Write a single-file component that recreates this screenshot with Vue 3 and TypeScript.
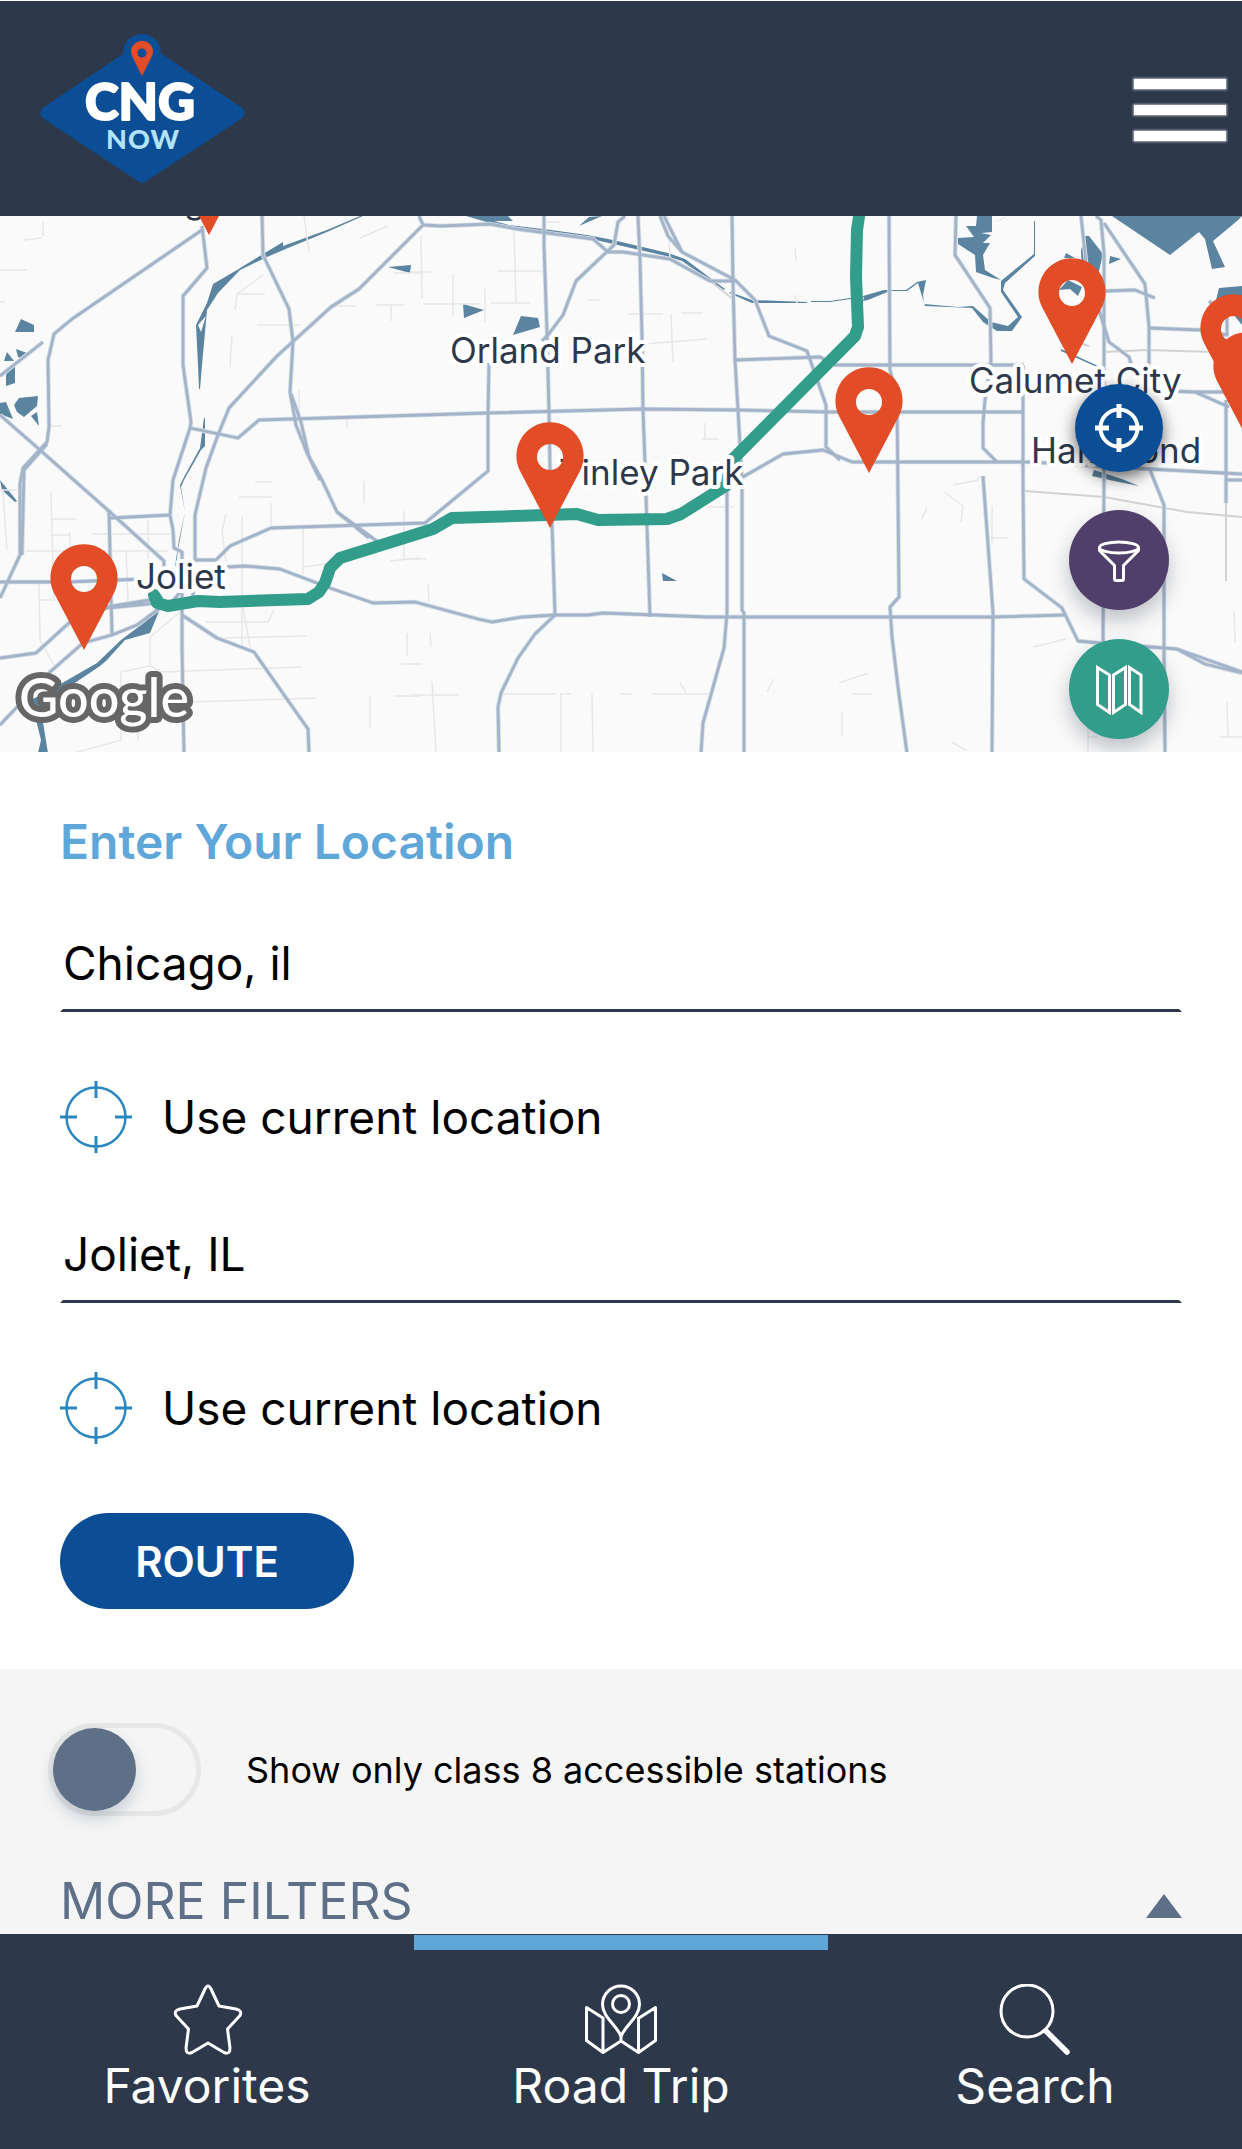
<script setup lang="ts">
import { ref } from 'vue'

interface Marker { x: number; y: number; solid?: boolean }
interface Place { name: string; x: number; y: number }
interface Stop { id: string; label: string; value: string }

const minorRoads: string[] = [
  'M23 240L42 238M43 222V236M0 270H27M0 302H5M304 216L309 252M360 238L388 226M394 273H420M237 294L263 275M237 294H265M237 294L235 310M257 325H300M232 335L230 367M299 390V418M331 306H356M376 305H404M391 305V321M51 426H62M347 418V428',
  'M0 490H18M3 490L7 551M51 492L54 600L38 600M51 519H76M51 535H70V532M26 551H168M92 534H173M70 535V551M148 520V560M126 550L128 602M39 584L40 640L54 665M226 514L222 531L226 562M242 517V648M239 497H272M271 503V527M303 528V574M303 567L332 563M255 482H272M364 481V503M404 511V560M390 561L420 558M243 608L250 647M274 610L268 622H206M217 638L307 636M150 637L180 612M150 637V666L121 672V740L74 753M150 666L162 672L301 667M190 702L316 698M370 697V728M407 633V656M401 664H420M394 696H420M138 726V741',
  'M421 236L422 298M410 272H431M453 274V317M423 304H481M491 303H530M485 289V322M514 230L516 303M498 271H543M588 300H600M546 222H560M668 216L670 260M628 314H663M681 313H703M645 344L707 339M671 314L673 362M795 247L796 261M795 295L797 303M705 423V439H719M702 439L719 439',
  'M707 507H733M410 559H426M428 584L429 602M430 633L431 647M410 664H422M432 682L436 753M410 695H459M500 694H556M560 694H571M561 694V753M592 694L593 753M620 694H632M652 694H708M680 683L686 692M774 679L767 692M953 485L978 480M944 492L963 506L961 522M927 508L922 519M992 506V543M986 538H1008M1033 647L1066 639M839 683L868 673M852 694H872M842 712V736M952 742L967 751M1088 720V753M1088 737H1098M1234 612L1235 642M1227 702L1228 738M1220 737H1242M975 481L982 476',
]

const midRoads: string[] = [
  'M710 281L733 299',
  'M1104 352L1147 350L1215 352',
  'M1025 491L1104 497L1187 512L1242 517',
  'M1226 503V581',
  'M1082 344L1089 346',
]

const majorRoads: string[] = [
  'M202 230L72 319L54 334L48 360L49 427L47 442L23 468L20 484V555L0 598',
  'M47 444L24 470L22 555',
  'M202 226L207 268L183 296V365L191 422L190 428L173 480L170 515L173 530L174 548L182 552V647L184 753',
  'M262 216L263 255L289 309L293 342L290 392L296 425L307 453L322 480L337 512L378 542',
  'M291 394L301 422L309 457L320 480',
  'M337 512L369 538',
  'M419 216L423 225L359 289L331 307L277 356L229 408L218 435L206 468L195 515V560H216L230 546L271 528L425 523L488 471V413L489 363',
  'M0 376L43 342',
  'M0 415L40 450L110 512L164 561V572',
  'M190 428L238 438L259 420L488 413L642 409L737 410L830 412H1024',
  'M109 510L112 635M110 518L170 515',
  'M0 582H67L143 579',
  'M227 567L245 566L280 569L330 588L373 603L415 602L478 619L492 622L522 617L555 615H588L603 613L708 617H992L1064 615',
  'M0 658L36 653L70 622L107 608L157 603M107 607L150 600M182 590L172 602M193 590V598',
  'M0 725L50 672L83 643L112 635L137 625L160 608',
  'M182 615L217 638L254 652L308 729L309 753',
  'M544 216V245L547 333L549 412L550 470L552 523L555 615L535 634L518 658L501 693L498 707L499 753',
  'M423 225L442 226L490 224L517 229L593 239L608 252H623L670 259L710 281H735',
  'M625 216L618 222L614 245L576 281L563 315L548 335L542 341',
  'M638 216L640 260L642 337L643 410L645 463L646 497L650 617',
  'M660 216L668 236L682 252L735 280L755 300L769 336L807 351L826 405V447L840 460',
  'M664 216L682 252',
  'M732 216L733 283L735 360L738 410L742 480V610L744 613V753',
  'M735 360L820 357L835 365H1024M1023 365V480L1024 579L1062 608L1078 641L1099 643L1177 649L1242 672',
  'M727 486L783 454L823 450L852 462H1029L1149 469L1242 474',
  'M727 488V613L724 648L703 723L701 753',
  'M889 216L890 370L897 397L899 597L890 607L892 637L898 687L907 753',
  'M956 216L955 255L990 308L991 363L985 400L983 423V448L997 462M983 476L993 613L992 753',
  'M1081 216L1086 262L1099 310L1109 342L1129 357L1133 370',
  'M1096 216L1101 220L1104 253V480L1103 643',
  'M1104 223L1145 284L1149 327V372',
  'M1105 291L1135 290L1155 298M1149 328L1200 330L1227 335V316L1209 301',
  'M1169 391L1195 392L1229 407M1195 392H1235M1226 400V503M1225 480H1242',
  'M1150 470L1164 505V648L1165 753',
  'M1177 649L1205 664L1242 673',
]

const water: string[] = [
  'M360 216L327 230L283 246V242L263 254L237 270L213 284L207 303L196 325L198 365L199 389L200 389L202 365L207 310L218 293L240 270L267 257L288 248L327 232L363 216ZM206 316L201 332L198 325Z',
  'M15 332L21 319L34 325V332ZM16 349L27 353L22 358L18 357ZM4 361L7 352L14 361ZM6 376L8 367H15V383L6 386ZM14 405L19 398L38 396L37 406L24 417L17 412ZM0 403L6 402L13 419L0 414ZM31 416L37 412L39 426Z',
  'M388 267L411 265L410 273ZM463 304L484 310L464 318ZM513 335L521 316L538 318L540 327ZM662 573L677 581H663Z',
  'M205 418V446L201 450L184 480L181 487L185 512L178 550L176 566H175L179 540L185 512L180 485L184 477L200 448L204 418Z',
  'M0 480L17 501L15 502L2 490Z',
  'M160 609L150 633L125 640L107 660L100 666L60 693L55 708L42 716L48 753H38L41 740L35 716L31 700L50 690L97 663L121 640L145 622L155 609Z',
  'M466 216H508L513 221L494 221L509 225L551 230L587 235L613 240L668 253L685 259L725 289L724 290L682 261L666 256L587 238L545 232L490 223ZM579 226L589 217L602 216Z',
  'M730 292L752 300L807 302V303H752L729 293ZM811 301H830L863 296L884 290H906L917 282L926 280L923 295L924 304L958 307L973 306L991 322L1008 326L1018 317L1001 292V281L1034 254V221H1035V256L1005 283L1003 290L1022 317L1012 331H997L983 322L972 308L925 306L918 283L907 291L890 291L868 300L863 301L864 297L830 302H811Z',
  'M977 216H992V232L981 233L991 235L983 243L990 243L983 255L985 270L1001 280L993 278L976 272L975 255L958 244V238L974 237L966 226L976 226ZM996 222L1007 216L1002 219Z',
  'M1112 216H1242L1237 221L1213 241L1225 267L1212 269L1205 239L1199 232L1170 255ZM1110 256L1121 259L1109 264ZM1085 236H1089L1103 254L1099 271H1082L1081 250ZM1066 253L1075 258L1064 258ZM1059 290L1068 280L1082 287L1078 296L1070 289ZM1219 288L1242 286V325L1233 314L1216 300Z',
  'M1061 349L1107 370L1106 371L1061 351ZM1118 375L1125 379L1119 377ZM1094 470L1122 479L1139 486L1114 481L1092 476Z',
]

const route =
  'M158 601L154 595L157 603L168 606L198 601L220 602L308 599L319 592L325 583L330 568L340 558L433 529L452 518L577 514L598 520L667 519L681 514L727 485L730 462L855 336L858 327L856 277L857 230L860 210'

const places: Place[] = [
  { name: 'g', x: 184, y: 213 },
  { name: 'Orland Park', x: 450, y: 363 },
  { name: 'Tinley Park', x: 559, y: 485 },
  { name: 'Joliet', x: 136, y: 589 },
  { name: 'Calumet City', x: 969, y: 393 },
  { name: 'Hammond', x: 1031, y: 463 },
]

const markers: Marker[] = [
  { x: 209, y: 235 },
  { x: 84, y: 650 },
  { x: 550, y: 528 },
  { x: 869, y: 473 },
  { x: 1072, y: 364 },
  { x: 1234, y: 400 },
  { x: 1247, y: 438, solid: true },
]

const pinShape = 'M0 0L-30 -57A33.6 33.6 0 1 1 30 -57Z'
const pinHole = 'M13 -71A13 13 0 1 0 -13 -71A13 13 0 1 0 13 -71Z'

const stops = ref<Stop[]>([
  { id: 'origin', label: 'Starting point', value: 'Chicago, il' },
  { id: 'destination', label: 'Destination', value: 'Joliet, IL' },
])
const classEight = ref(false)
</script>

<template>
  <div class="page">
    <header class="topbar">
      <a href="#" class="brand" aria-label="CNG Now">
        <svg width="206" height="150" viewBox="0 0 206 150">
          <circle cx="102" cy="19" r="19" fill="#0b4e96" />
          <path d="M7 79L83 28L102 15L122 28L198 79L102 142Z" fill="#0b4e96" stroke="#0b4e96" stroke-width="13" stroke-linejoin="round" />
          <path d="M102 42L93 24A11 11 0 1 1 111 24ZM106.5 19A4.5 4.5 0 1 0 97.5 19A4.5 4.5 0 1 0 106.5 19Z" fill="#e24c26" fill-rule="evenodd" />
          <text x="100" y="86" class="brand-top">CNG</text>
          <text x="103" y="115" class="brand-sub">NOW</text>
        </svg>
      </a>
      <button type="button" class="burger" aria-label="Menu"><i></i><i></i><i></i></button>
    </header>

    <section class="map">
      <svg class="map-canvas" viewBox="0 216 1242 536" preserveAspectRatio="xMidYMid slice">
        <path v-for="d in water" :key="d" :d="d" fill="#5b84a0" fill-rule="evenodd" />
        <g fill="none" stroke-linejoin="round">
          <path v-for="d in minorRoads" :key="d" :d="d" stroke="#e7e7e7" stroke-width="1.5" />
          <path v-for="d in midRoads" :key="d" :d="d" stroke="#d2d2d2" stroke-width="2" />
          <path v-for="d in majorRoads" :key="d" :d="d" stroke="#d5dde7" stroke-width="4.5" />
          <path v-for="d in majorRoads" :key="d" :d="d" stroke="#a3b4c9" stroke-width="2.8" />
          <path :d="route" stroke="#319d8a" stroke-width="12" />
        </g>
        <text v-for="p in places" :key="p.name" :x="p.x" :y="p.y" class="place">{{ p.name }}</text>
        <path
          v-for="m in markers"
          :key="m.x"
          :d="m.solid ? pinShape : pinShape + pinHole"
          :transform="`translate(${m.x} ${m.y})`"
          fill="#e24c26"
          fill-rule="evenodd"
        />
        <text x="19" y="717" class="google">Google</text>
      </svg>

      <div class="map-tools">
        <button type="button" class="tool locate" aria-label="Center on my location">
          <svg width="48" height="48" viewBox="0 0 48 48" fill="none" stroke="#fff">
            <circle cx="24" cy="24" r="18.5" stroke-width="4" />
            <path d="M24 0V14M24 34V48M0 24H14M34 24H48" stroke-width="5" />
          </svg>
        </button>
        <button type="button" class="tool filter" aria-label="Filter">
          <svg width="42" height="48" viewBox="0 0 42 48" fill="none" stroke="#fff" stroke-width="3" stroke-linejoin="round">
            <ellipse cx="21" cy="11.5" rx="19.5" ry="5.5" />
            <path d="M1.5 11V14.5L16.500 29.5V42.5Q16.5 44.5 18 44.5H24Q25.5 44.5 25.5 42.5V29.5L40.5 14.5V11" />
          </svg>
        </button>
        <button type="button" class="tool atlas" aria-label="Map view">
          <svg width="48" height="52" viewBox="0 0 48 52" fill="none" stroke="#fff" stroke-width="3">
            <path d="M2.5 4.5L14.5 12V49.5L2.5 41.5ZM18.5 12L30.5 4.500V41.5L18.5 49.5ZM34.5 4.5L46 12V49.5L34.5 41.5Z" />
          </svg>
        </button>
      </div>
    </section>

    <form class="trip" @submit.prevent>
      <h1>Enter Your Location</h1>
      <div v-for="stop in stops" :key="stop.id" class="stop">
        <input :id="stop.id" v-model="stop.value" type="text" :aria-label="stop.label" />
        <button type="button" class="current">
          <svg width="72" height="72" viewBox="0 0 72 72" fill="none" stroke="#2b87bf" stroke-width="2.5">
            <circle cx="36" cy="36" r="29.5" />
            <path d="M36 0V17M36 55V72M0 36H17M55 36H72" stroke-width="3" />
          </svg>
          <span>Use current location</span>
        </button>
      </div>
      <button type="submit" class="go">ROUTE</button>
    </form>

    <section class="filters">
      <label class="switch">
        <input v-model="classEight" type="checkbox" />
        <span>Show only class 8 accessible stations</span>
      </label>
      <button type="button" class="more">
        <span>MORE FILTERS</span>
        <svg width="36" height="24" viewBox="0 0 36 24"><path d="M18 0L36 24H0Z" fill="#5e6f88" /></svg>
      </button>
    </section>

    <nav class="tabs">
      <a href="#">
        <svg width="72" height="72" viewBox="0 0 72 72">
          <path d="M34 5Q37 -1 40 5L48 22L65 25Q71.5 26.5 69 31.500L56.5 45L59 64Q59 71 53 68.5L37 59L21 68.5Q15 71 15 64L17.5 45L5 31.5Q2.5 26.5 9 25L26 22Z" />
        </svg>
        <span>Favorites</span>
      </a>
      <a href="#" class="active" aria-current="page">
        <svg width="72" height="72" viewBox="0 0 72 72">
          <path d="M36 53C34 43 17.5 34 17.5 20.5A18.5 18.5 0 0 1 54.5 20.5C54.5 34 38 43 36 53V57L53.5 68.5L70.5 56.5V23.5L54 34M53.5 33V68.5M36 57L18 68.5L1.5 56.5V23.5L18 34M18 33V68.5" />
          <circle cx="36" cy="20" r="8.5" />
        </svg>
        <span>Road Trip</span>
      </a>
      <a href="#">
        <svg width="72" height="72" viewBox="0 0 72 72">
          <circle cx="28" cy="27" r="26" stroke-width="3" />
          <path d="M47 47L68 68" stroke-width="5.5" stroke-linecap="round" />
        </svg>
        <span>Search</span>
      </a>
    </nav>
  </div>
</template>

<style>
body {
  background: #fff;
}
</style>

<style scoped>
.page {
  display: flex;
  flex-direction: column;
  min-height: 100vh;
  font-family: Inter, "Liberation Sans", sans-serif;
  color: #000;
}
button,
input {
  font: inherit;
  color: inherit;
  box-sizing: border-box;
  margin: 0;
  padding: 0;
  border: 0;
  border-radius: 0;
  background: none;
}
button {
  cursor: pointer;
}
svg {
  display: block;
  flex: none;
}
.topbar {
  display: flex;
  align-items: center;
  justify-content: space-between;
  height: 215px;
  padding: 0 16px 0 40px;
  border-top: 1px solid #fff;
  background: #2d394b;
}
.brand-top {
  font: 900 51px Lato, sans-serif;
  fill: #fff;
  stroke: #fff;
  stroke-width: 2px;
  stroke-linejoin: round;
  text-anchor: middle;
}
.brand-sub {
  font: 900 27px Lato, sans-serif;
  fill: #b3e3f9;
  letter-spacing: 1px;
  text-anchor: middle;
}
.burger {
  display: flex;
  flex-direction: column;
  gap: 16px;
  width: 92px;
  padding-top: 2px;
}
.burger i {
  height: 10px;
  background: #fff;
  box-shadow: 0 0 2px 1px rgba(255, 255, 255, 0.6);
}
.map {
  position: relative;
  height: 536px;
  overflow: hidden;
  background: #fafafa;
}
.map-canvas {
  width: 100%;
  height: 100%;
}
.place {
  font-size: 35px;
  fill: #2d394b;
  stroke: #fff;
  stroke-width: 8px;
  stroke-linejoin: round;
  paint-order: stroke;
}
.google {
  font: 500 54px Lato, sans-serif;
  fill: #fff;
  stroke: #666;
  stroke-width: 12px;
  stroke-linejoin: round;
  paint-order: stroke;
}
.map-tools {
  position: absolute;
  top: 168px;
  right: 73px;
  display: flex;
  flex-direction: column;
  align-items: center;
  gap: 29px;
}
.tool {
  display: flex;
  align-items: center;
  justify-content: center;
  width: 100px;
  height: 100px;
  border-radius: 50%;
  box-shadow: 0 10px 20px rgba(45, 57, 75, 0.3);
}
.locate {
  width: 88px;
  height: 88px;
  margin-bottom: 9px;
  background: #0b4e96;
  box-shadow: 0 6px 16px rgba(0, 0, 0, 0.6);
}
.filter {
  background: #513f6b;
}
.atlas {
  background: #319d8a;
}
.trip {
  padding: 58px 60px 60px;
}
h1 {
  margin: 0 0 40px;
  font-size: 48px;
  line-height: 64px;
  font-weight: 600;
  color: #5fa7d9;
}
.stop input {
  display: block;
  width: 100%;
  height: 98px;
  border: 3px solid transparent;
  border-bottom-color: #2d394b;
  outline: 0;
  font-size: 46px;
}
.stop + .stop {
  margin-top: 52px;
}
.current {
  display: flex;
  align-items: center;
  gap: 30px;
  margin-top: 69px;
  font-size: 46px;
  line-height: 72px;
}
.go {
  display: block;
  width: 294px;
  height: 96px;
  margin-top: 69px;
  border-radius: 48px;
  background: #0b4e96;
  color: #fff;
  font-size: 42px;
  font-weight: 600;
}
.filters {
  flex: 1;
  padding: 54px 60px 0 48px;
  background: #f5f5f5;
}
.switch {
  display: flex;
  align-items: center;
  gap: 45px;
  font-size: 36px;
  line-height: 48px;
}
.switch input {
  appearance: none;
  flex: none;
  width: 153px;
  height: 93px;
  border: 5px solid #e7e7e7;
  border-radius: 47px;
}
.switch input::before {
  content: "";
  display: block;
  width: 83px;
  height: 83px;
  border-radius: 50%;
  background: #5e6f88;
  box-shadow: 0 8px 16px rgba(94, 111, 136, 0.3);
}
.switch input:checked::before {
  margin-left: auto;
}
.more {
  display: flex;
  align-items: flex-end;
  justify-content: space-between;
  width: 100%;
  margin-top: 52px;
  padding-left: 12px;
  color: #5e6f88;
  font-size: 50px;
  line-height: 66px;
}
.more svg {
  margin-bottom: 16px;
}
.tabs {
  display: flex;
  padding-top: 1px;
  background: #2d394b;
}
.tabs a {
  flex: 1;
  display: flex;
  flex-direction: column;
  align-items: center;
  padding: 34px 0 33px;
  border-top: 15px solid transparent;
  color: #fff;
  font-size: 48px;
  line-height: 60px;
  text-decoration: none;
}
.tabs a.active {
  border-top-color: #5fa7d9;
}
.tabs svg {
  fill: none;
  stroke: #fff;
  stroke-width: 3px;
  stroke-linejoin: round;
}
</style>
